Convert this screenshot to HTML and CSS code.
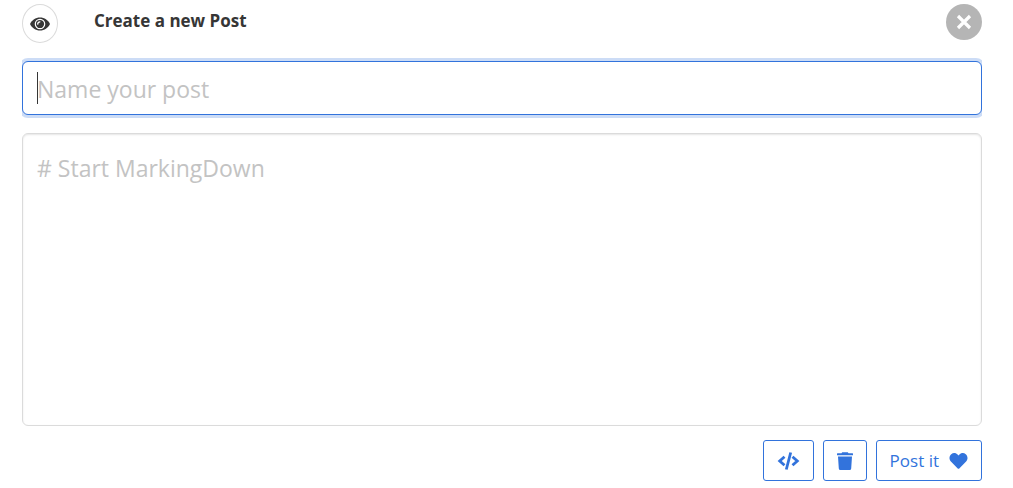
FILE: index.html
```html
<!DOCTYPE html>
<html lang="en">
<head>
    <meta charset="UTF-8">
    <meta name="viewport" content="width=device-width, initial-scale=1.0">
    <title>Create a new Post</title>
    <link rel="stylesheet" href="styles.css">
</head>
<body>
    <form class="post-form" method="post">
        <header class="post-header">
            <button type="button" class="preview-button" aria-label="Preview">
                <svg width="20" height="14" viewBox="0 0 20 14" fill="none">
                    <path fill="currentColor" d="M0 7C2 3 5.500 0.500 10 0.500S18 3 20 7C18 11 14.500 13.500 10 13.500S2 11 0 7z"/>
                    <circle cx="10" cy="7" r="4.700" stroke="#fff" stroke-width="1.200"/>
                    <path stroke="#fff" stroke-width="1.300" d="M7.800 7.600A2.300 2.300 0 0 1 10.300 4.800"/>
                </svg>
            </button>
            <h1 class="post-heading">Create a new Post</h1>
            <button type="button" class="close-button" aria-label="Close">
                <svg width="16" height="16" viewBox="0 0 16 16" stroke="currentColor" stroke-width="3.200">
                    <path d="M2 2L14 14M14 2L2 14"/>
                </svg>
            </button>
        </header>

        <div class="field">
            <input type="text" class="input" name="title" placeholder="Name your post" aria-label="Post name" autofocus>
            <span class="caret"></span>
        </div>

        <textarea class="textarea" name="content" placeholder="# Start MarkingDown" aria-label="Post content"></textarea>

        <div class="buttons">
            <button type="button" class="button" aria-label="Code">
                <svg width="23" height="18" viewBox="0 0 23 18" fill="none" stroke="currentColor" stroke-width="2.800">
                    <path d="M7.500 4.700L2.700 9L7.500 13.300M15.500 4.700L20.300 9L15.500 13.300M13.700 0.500L9.300 17.500"/>
                </svg>
            </button>
            <button type="button" class="button" aria-label="Delete">
                <svg width="16" height="18" viewBox="0 0 16 18" fill="currentColor">
                    <path d="M0.500 1.300H4.500L5.200 0.200H10.800L11.500 1.300H15.500Q16 1.300 16 1.800V3.300H0V1.800Q0 1.300 0.500 1.300zM1 4.500H15L14.200 16.500Q14.100 18 12.600 18H3.400Q1.900 18 1.800 16.500z"/>
                </svg>
            </button>
            <button type="submit" class="button">
                Post it
                <svg width="19" height="18" viewBox="0 0 512 512" fill="currentColor">
                    <path d="M462.3 62.6C407.5 15.9 326 24.3 275.7 76.2L256 96.5l-19.7-20.3C186.1 24.3 104.5 15.9 49.7 62.6c-62.8 53.6-66.1 149.8-9.9 207.9l193.5 199.8c12.5 12.9 32.8 12.9 45.3 0l193.5-199.8c56.3-58.1 53-154.3-9.8-207.9z"/>
                </svg>
            </button>
        </div>
    </form>
</body>
</html>
```
FILE: styles.css
```css
* {
    box-sizing: border-box;
}

body {
    margin: 0;
    padding: 4px 31px 7px 22px;
    background-color: #fff;
    font-family: "Open Sans", "Noto Sans", sans-serif;
    font-size: 17px;
    color: #363636;
}

button {
    padding: 0;
    font-family: inherit;
    cursor: pointer;
}

.post-form {
    display: flex;
    flex-direction: column;
    gap: 18px;
    min-height: calc(100vh - 11px);
    overflow: hidden;
}

.post-header {
    display: flex;
    align-items: flex-start;
}

.preview-button {
    display: flex;
    align-items: center;
    justify-content: center;
    width: 36px;
    height: 39px;
    border: 1px solid #dbdbdb;
    border-radius: 50%;
    background-color: #fff;
    color: #363636;
}

.post-heading {
    flex: 1;
    margin: 0 0 0 36px;
    font-size: 17px;
    font-weight: 700;
    line-height: 34px;
}

.close-button {
    display: flex;
    align-items: center;
    justify-content: center;
    width: 36px;
    height: 36px;
    border: none;
    border-radius: 50%;
    background-color: #b5b5b5;
    color: #fff;
}

.field {
    display: flex;
    position: relative;
}

.input,
.textarea {
    width: 100%;
    border: 1px solid #dbdbdb;
    border-radius: 6px;
    background-color: #fff;
    box-shadow: inset 0 1px 2px rgba(10, 10, 10, 0.1);
    color: #363636;
    font-family: inherit;
    font-size: 23px;
    line-height: 36px;
    outline: none;
}

.input {
    height: 54px;
    padding: 10px 14px 8px;
    caret-color: transparent;
}

.input:focus {
    border-color: #3273dc;
    box-shadow: 0 0 0 3px rgba(50, 115, 220, 0.25);
}

.caret {
    position: absolute;
    top: 11px;
    left: 15px;
    width: 1px;
    height: 32px;
    background-color: #363636;
}

.textarea {
    flex: 1;
    min-height: 200px;
    padding: 16px 14px;
    resize: none;
}

.input::placeholder,
.textarea::placeholder {
    color: #c3c3c3;
    opacity: 1;
}

.buttons {
    display: flex;
    justify-content: flex-end;
    gap: 9px;
    margin-top: -4px;
}

.button {
    display: flex;
    align-items: center;
    gap: 10px;
    height: 41px;
    padding: 0 13px;
    border: 1px solid #3273dc;
    border-radius: 3px;
    background-color: #fff;
    color: #3273dc;
    font-size: 17px;
}
```
